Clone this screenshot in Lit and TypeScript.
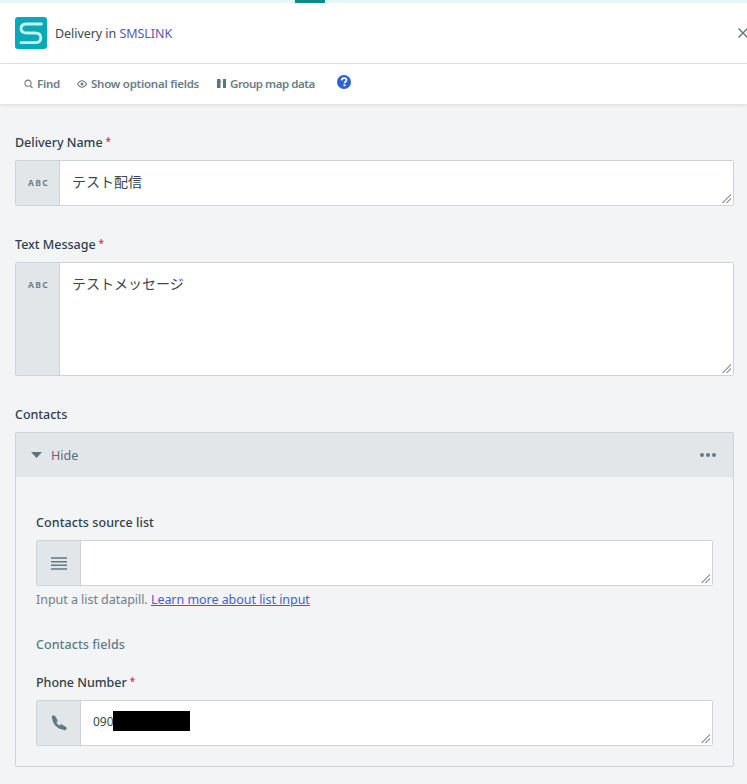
import { LitElement, html, css } from "lit";
import { customElement } from "lit/decorators.js";

@customElement("app-root")
export class AppRoot extends LitElement {
  static styles = css`
    :host {
      display: block;
      width: 747px;
      height: 784px;
      overflow: hidden;
      background: #f3f4f6;
      font-family: "Noto Sans", "Noto Sans CJK JP", sans-serif;
      color: #37474f;
      font-size: 13px;
    }
    .topstrip { height: 3px; background: #e5f6f6; display: flex; padding-left: 295px; }
    .tab { width: 30px; height: 3px; background: #0b8a91; }
    .head {
      height: 61px; box-sizing: border-box; background: #fff; border-bottom: 1px solid #e4e6e8;
      display: flex; align-items: center; padding-left: 15px; position: relative; overflow: hidden;
    }
    .logo { width: 32px; height: 32px; flex: none; display: block; }
    .title { margin-left: 8px; font-size: 12.5px; color: #3d4a55; letter-spacing: -0.05px; padding-top: 1px; }
    .title span { color: #5b57a8; }
    .close { position: absolute; left: 738px; top: 25px; width: 10px; height: 10px; }
    .toolbar {
      height: 40px; box-sizing: border-box; background: #fff;
      box-shadow: 0 1px 4px rgba(60, 70, 80, 0.14);
      display: flex; align-items: center; padding: 0 0 1px 24px; position: relative;
      font-size: 11.5px; font-weight: 600; color: #6b7c88; letter-spacing: -0.25px;
    }
    .tool { display: flex; align-items: center; gap: 4px; }
    .find { margin-right: 17px; }
    .opt { margin-right: 18px; }
    .grp { margin-right: 22px; letter-spacing: -0.45px; }
    .tool svg { display: block; flex: none; }
    .help { width: 14px; height: 14px; margin-top: -3px; display: block; }
    .body { padding: 28px 13px 0 15px; }
    .label {
      font-size: 12.5px; font-weight: 500; color: #2f3f4c; line-height: 22px; height: 20px;
      letter-spacing: -0.02px; display: flex; align-items: flex-start;
    }
    .wide { letter-spacing: 0.08px; }
    .label i { color: #e0234e; font-style: normal; font-size: 10px; margin-left: 3px; line-height: 19px; }
    .field {
      margin-top: 8px; display: flex; box-sizing: border-box; border: 1px solid #cdd3d9;
      border-radius: 2px; background: #fff; overflow: hidden;
    }
    .h46 { height: 46px; }
    .h114 { height: 114px; }
    .addon {
      width: 43px; flex: none; background: #e3e6e9; border-right: 1px solid #cdd3d9;
      display: flex; align-items: flex-start; justify-content: center; padding-top: 16px; box-sizing: content-box;
    }
    .abc { font-size: 8.500px; font-weight: 700; letter-spacing: 1.400px; color: #6f7f8a; line-height: 12px; margin-left: 2px; }
    .input {
      flex: 1; min-width: 0; resize: both; overflow: auto; background: #fff; box-sizing: border-box;
      padding: 9px 12px; font-size: 14px; line-height: 22px; color: #37474f;
      font-family: "Noto Sans CJK JP", sans-serif;
    }
    .input::-webkit-resizer {
      background: linear-gradient(135deg, transparent 0 46%, #a8a8a8 46% 56%, transparent 56% 70%, #a8a8a8 70% 80%, transparent 80%) right 2px bottom 2px / 9px 9px no-repeat;
    }
    .gap1 { margin-top: 28px; }
    .gap2 { margin-top: 28px; }
    .group { margin-top: 8px; border: 1px solid #cdd3d9; border-radius: 2px; height: 335px; box-sizing: border-box; }
    .ghead {
      height: 44px; background: #e3e6e9; display: flex; align-items: center; padding: 0 17px 0 15px;
      color: #5a6a76; font-size: 12.5px;
    }
    .ghead .hide { margin-left: 9px; flex: 1; }
    .gbody { padding: 35px 20px 0; }
    .hint { margin-top: 5px; font-size: 12.5px; line-height: 17px; color: #6f8089; letter-spacing: -0.04px; }
    .hint a { color: #4a5fc1; text-decoration: underline; }
    .sub { margin-top: 26px; font-size: 12.5px; font-weight: 500; line-height: 22px; height: 20px; color: #5b7a86; letter-spacing: 0.07px; }
    .mt18 { margin-top: 18px; }
    .phone { font-size: 12px; font-family: "Noto Sans", sans-serif; padding: 10px 12px; display: block; white-space: nowrap; }
    .redact { display: inline-block; width: 77px; height: 20px; background: #000; vertical-align: top; margin-left: -1px; }
    .center { align-items: center; padding-top: 0; }
  `;

  render() {
    return html`
      <div class="topstrip"><div class="tab"></div></div>
      <div class="head">
        <svg class="logo" viewBox="0 0 32 32">
          <rect width="32" height="32" rx="3" fill="#0aa9b7" />
          <path d="M26.500 7H12C8 7 6 9 6 11.500C6 14 8 16 12 16H20C24 16 25.800 18 25.800 20.800C25.800 23.500 24 25.700 20 25.700H6" fill="none" stroke="#c9f0ee" stroke-width="2.800" stroke-linecap="round" />
        </svg>
        <div class="title">Delivery in <span>SMSLINK</span></div>
        <svg class="close" viewBox="0 0 10 10"><path d="M0.500 0.500L9.500 9.500M9.500 0.500L0.500 9.500" stroke="#5f7280" stroke-width="1.300" fill="none" /></svg>
      </div>
      <div class="toolbar">
        <div class="tool find">
          <svg width="9" height="10" viewBox="0 0 9 10"><circle cx="4" cy="4.200" r="3.100" fill="none" stroke="#6b7c88" stroke-width="1.100" /><path d="M6.200 6.500L8.500 9.200" stroke="#6b7c88" stroke-width="1.200" /></svg>
          <span>Find</span>
        </div>
        <div class="tool opt">
          <svg width="10" height="8" viewBox="0 0 10 8"><path d="M0.500 4C2 1.500 3.500 0.700 5 0.700C6.500 0.700 8 1.500 9.500 4C8 6.500 6.500 7.300 5 7.300C3.500 7.300 2 6.500 0.500 4Z" fill="none" stroke="#6b7c88" stroke-width="1.100" /><circle cx="5" cy="4" r="1.500" fill="#6b7c88" /></svg>
          <span>Show optional fields</span>
        </div>
        <div class="tool grp">
          <svg width="9" height="9" viewBox="0 0 9 9"><rect x="0" y="0" width="3.500" height="9" fill="#5f7280" /><rect x="6" y="0" width="3" height="9" fill="#5f7280" /><rect x="3.500" y="2" width="1" height="1" fill="#5f7280" /></svg>
          <span>Group map data</span>
        </div>
        <svg class="help" viewBox="0 0 14 14">
          <circle cx="7" cy="7" r="7" fill="#2a62d3" />
          <path d="M4.600 5.400C4.700 3.900 5.700 3.100 7.100 3.100C8.500 3.100 9.500 3.900 9.500 5.100C9.500 6.700 7.500 6.700 7.500 8.200" fill="none" stroke="#fff" stroke-width="1.700" />
          <rect x="6.500" y="9.300" width="2" height="1.900" fill="#fff" />
        </svg>
      </div>
      <div class="body">
        <div class="label">Delivery Name<i>*</i></div>
        <div class="field h46">
          <div class="addon"><span class="abc">ABC</span></div>
          <div class="input">テスト配信</div>
        </div>
        <div class="label gap1">Text Message<i>*</i></div>
        <div class="field h114">
          <div class="addon"><span class="abc">ABC</span></div>
          <div class="input">テストメッセージ</div>
        </div>
        <div class="label gap2">Contacts</div>
        <div class="group">
          <div class="ghead">
            <svg width="11" height="6" viewBox="0 0 11 6"><path d="M0 0H11L5.500 6Z" fill="#5f7280" /></svg>
            <span class="hide">Hide</span>
            <svg width="16" height="4" viewBox="0 0 16 4"><circle cx="2" cy="2" r="2" fill="#5f7a88" /><circle cx="8" cy="2" r="2" fill="#5f7a88" /><circle cx="14" cy="2" r="2" fill="#5f7a88" /></svg>
          </div>
          <div class="gbody">
            <div class="label wide">Contacts source list</div>
            <div class="field h46">
              <div class="addon center">
                <svg width="16" height="13" viewBox="0 0 16 13"><path d="M0 1H16M0 4.700H16M0 8.300H16M0 12H16" stroke="#5f7a88" stroke-width="1.400" fill="none" /></svg>
              </div>
              <div class="input"></div>
            </div>
            <div class="hint">Input a list datapill. <a>Learn more about list input</a></div>
            <div class="sub">Contacts fields</div>
            <div class="label mt18">Phone Number<i>*</i></div>
            <div class="field h46">
              <div class="addon center">
                <svg width="18" height="18" viewBox="0 0 24 24" fill="none" stroke="#5f7a88" stroke-linecap="round">
                  <path d="M5 5C4.500 12 11.500 19.500 19 19" stroke-width="3.600" />
                  <path d="M4.800 4.200L7.600 9" stroke-width="5" />
                  <path d="M19.800 19.200L15 16.400" stroke-width="5" />
                </svg>
              </div>
              <div class="input phone">090<span class="redact"></span></div>
            </div>
          </div>
        </div>
      </div>
    `;
  }
}
